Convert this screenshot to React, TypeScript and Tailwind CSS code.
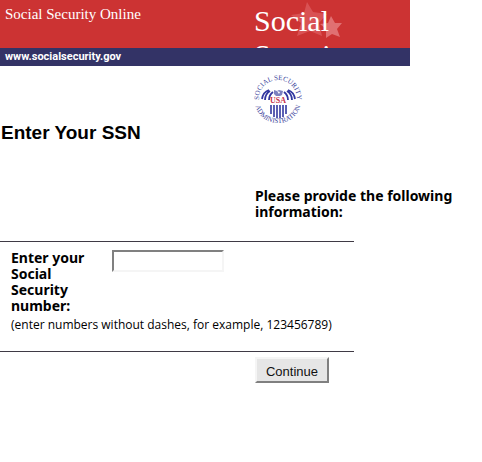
const sans = "font-['Liberation_Sans',Arial,sans-serif]";
const serif = "font-['Liberation_Serif','Times_New_Roman',serif]";

function Stars() {
  return (
    <svg className="absolute left-8 top-0 h-12 w-16" viewBox="285 0 64 48" aria-hidden="true">
      <path d="M306 2l6 10 14 2-8 9 3 13-12-5-13 5 4-13-10-8 13-2z" fill="#d95254" />
      <path d="M330 16l4 7 7 0-5 6 3 8-8-3-6 4v-9l-6-5 8-1z" fill="#e07072" />
    </svg>
  );
}

function Seal() {
  return (
    <svg className="h-[50px] w-12 overflow-visible" viewBox="0 0 48 50" role="img" aria-label="Social Security Administration seal">
      <defs>
        <path id="upper" d="M4 25a19 19 0 0 1 38 0" />
        <path id="lower" d="M0 27a23 22 0 0 0 46 0" />
      </defs>
      <g className={serif} fontSize="7" fill="#40459c">
        <text>
          <textPath href="#upper" startOffset="50%" textAnchor="middle">SOCIAL SECURITY</textPath>
        </text>
        <text>
          <textPath href="#lower" startOffset="50%" textAnchor="middle">ADMINISTRATION</textPath>
        </text>
      </g>
      <g fill="none" stroke="#3338a0">
        <path d="M16 31v9M19 31v12M22 31v13M25 31v13M28 31v12M31 31v9" strokeWidth="1.6" />
        <path d="M7 25q1-7 7-9M10 26q0-6 5-9M14 26q0-5 4-8M40 25q-1-7-7-9M37 26q0-6-5-9M33 26q0-5-4-8" strokeWidth="1.8" />
      </g>
      <path d="M19 16l3 1 2-1 4 1-1 4-2 1h-4l-2-2z" fill="#7c81c0" />
      <path d="M22 17l3 1-1 2z" fill="#fff" />
      <text x="23" y="29" textAnchor="middle" className={serif} fontSize="8" fontWeight="700" fill="#c72f4a">
        USA
      </text>
    </svg>
  );
}

export default function App() {
  return (
    <div className={`min-h-screen bg-white text-black ${sans}`}>
      <header className="w-[85%] text-white">
        <div className={`flex h-12 overflow-hidden bg-[#cc3333] ${serif}`}>
          <div className="w-[254px] shrink-0 pl-[5px] pt-1 text-[15px] leading-5">Social Security Online</div>
          <div className="relative min-w-0 flex-1">
            <Stars />
            <div className="relative w-24 pt-1 text-[30px] leading-[34px]">Social Security</div>
          </div>
        </div>
        <div className="bg-[#333366] pl-[5px] font-['Roboto',sans-serif] text-[11px] font-bold leading-[18px]">
          <a href="#home">www.socialsecurity.gov</a>
        </div>
      </header>

      <main>
        <div className="ml-[255px] pt-2">
          <Seal />
        </div>
        <h1 className="pl-px text-[19px] font-bold leading-[18px]">Enter Your SSN</h1>
        <p className="ml-[255px] mt-[46px] w-52 font-['Noto_Sans','Open_Sans',sans-serif] text-sm font-bold leading-4">
          Please provide the following information:
        </p>
        <form>
          <div className="mt-[21px] w-[354px] border-y border-[#3f3a45] pb-4 pl-[11px] pt-2">
            <div className="flex items-start">
              <label
                htmlFor="ssn"
                className="w-[101px] pr-4 font-['Noto_Sans','Open_Sans',sans-serif] text-sm font-bold leading-4"
              >
                Enter your Social Security number:
              </label>
              <input
                id="ssn"
                type="text"
                aria-describedby="ssn-hint"
                className="h-[22px] w-28 border-2 border-b-[#f5f5f5] border-l-[#808080] border-r-[#f5f5f5] border-t-[#808080] bg-white px-1 text-xs outline-none"
              />
            </div>
            <p id="ssn-hint" className="whitespace-nowrap pt-px font-['Open_Sans',sans-serif] text-xs leading-5">
              (enter numbers without dashes, for example, 123456789)
            </p>
          </div>
          <button
            type="button"
            className="ml-[255px] mt-[5px] block h-[26px] w-[74px] border-2 border-b-[#808080] border-l-[#f5f5f5] border-r-[#808080] border-t-[#f5f5f5] bg-[#e6e6e6] pt-1 text-[13px] leading-4 text-[#111111]"
          >
            Continue
          </button>
        </form>
      </main>
    </div>
  );
}
